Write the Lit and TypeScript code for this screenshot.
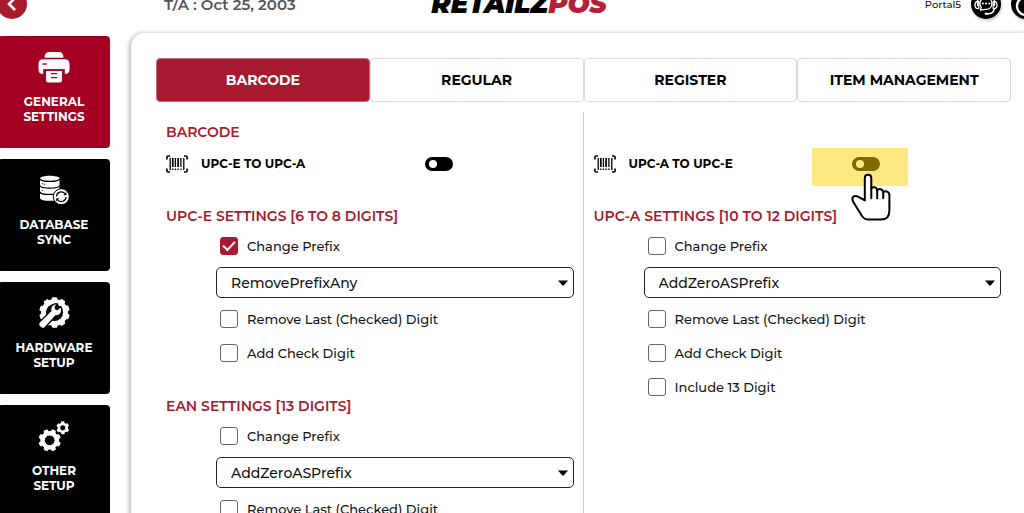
import { LitElement, html, css, nothing, type TemplateResult } from "lit";
import { customElement, property, state } from "lit/decorators.js";
import { classMap } from "lit/directives/class-map.js";

// Outline of a toothed wheel centred on (cx, cy).
function gearPath(cx: number, cy: number, outer: number, inner: number, teeth: number, turn = 0): string {
  const step = (Math.PI * 2) / teeth;
  const points: string[] = [];
  for (let i = 0; i < teeth; i++) {
    const a = i * step + turn;
    const corners: [number, number][] = [
      [a - step * 0.3, inner],
      [a - step * 0.2, outer],
      [a + step * 0.2, outer],
      [a + step * 0.3, inner],
    ];
    for (const [t, r] of corners) {
      points.push(`${(cx + r * Math.cos(t)).toFixed(2)} ${(cy + r * Math.sin(t)).toFixed(2)}`);
    }
  }
  return `M${points.join("L")}Z`;
}

const icons: Record<string, TemplateResult> = {
  printer: html`<svg viewBox="0 0 32 32" aria-hidden="true">
    <path fill="#fff" d="M6.5 6.8 Q6.5 1 11.5 1 H20.5 Q25.5 1 25.5 6.8 Z"/>
    <path fill="#fff" d="M5 8.3 H27 Q31.5 8.3 31.5 13 V18.5 Q31.5 23 26.8 23 V18.6 H5.2 V23 Q.5 23 .5 18.5 V13 Q.5 8.3 5 8.3Z"/>
    <path stroke="#a30024" stroke-width="1.4" stroke-linecap="round" d="M5 13H8.2M6 18.9H26"/>
    <path fill="#fff" d="M8 20H24V29.5Q24 31.5 22 31.5H10Q8 31.5 8 29.5Z"/>
    <path stroke="#a30024" stroke-width="1.3" stroke-linecap="round" d="M13.5 22.7H18.8M13.5 26.6H18.8"/>
  </svg>`,
  database: html`<svg viewBox="0 0 32 32" aria-hidden="true">
    <path fill="#fff" d="M2 4.5C2 .8 21.5 .8 21.5 4.5V24C21.5 27.8 2 27.8 2 24Z"/>
    <path fill="none" stroke="#000" stroke-width="1.3" d="M2 4.8C2.5 8.2 21 8.2 21.5 4.8M2 11.5C2.5 15 21 15 21.5 11.5M2 17.8C2.5 21.3 21 21.3 21.5 17.8"/>
    <path stroke="#000" stroke-width="1" stroke-linecap="round" d="M4.2 9.7H4.4M6.2 10.2H6.6M4.2 16.3H4.4"/>
    <circle cx="23.3" cy="22.7" r="8" fill="#fff" stroke="#000" stroke-width="1"/>
    <path fill="none" stroke="#000" stroke-width="1.2" d="M18.5 22.5A4.8 4.8 0 0 1 27 19.6M28.1 22.9A4.8 4.8 0 0 1 19.6 25.8"/>
    <path d="M28.4 18V21.2H25.2ZM18.2 27.4V24.2H21.4Z"/>
  </svg>`,
  hardware: html`<svg viewBox="0 0 32 32" aria-hidden="true">
    <path fill="#fff" stroke="#fff" stroke-width="1.4" stroke-linejoin="round" d="${gearPath(16.5, 15.5, 14.6, 12.8, 10, 0.31)}"/>
    <circle cx="16.5" cy="15.5" r="8.6"/>
    <path fill="#fff" stroke="#000" stroke-width="1.3" stroke-linejoin="round" d="M22.8 9.6 19.5 12.6 17.6 11.8 17.2 9.8 19.8 7C15.6 5.8 11.8 9.2 12.9 13.8L1 25.6C-.6 28.6 3.4 32.6 6.6 31L17.9 18.7C22.6 19.6 25.3 13.8 22.8 9.6Z"/>
  </svg>`,
  gears: html`<svg viewBox="0 0 32 32" aria-hidden="true">
    <path fill="#fff" fill-rule="evenodd" stroke="#fff" stroke-width="1" stroke-linejoin="round" d="${gearPath(11.7, 20.3, 10.8, 8.9, 8, 0.39)}M17 20.3A5.3 5.3 0 1 0 6.4 20.3A5.3 5.3 0 1 0 17 20.3Z"/>
    <path fill="#fff" fill-rule="evenodd" stroke="#fff" stroke-width=".8" stroke-linejoin="round" d="${gearPath(24.8, 7.8, 6.2, 4.8, 6, 0.5)}M27.8 7.8A3 3 0 1 0 21.8 7.8A3 3 0 1 0 27.8 7.8Z"/>
  </svg>`,
};

const barcodeIcon = html`<svg class="barcode" viewBox="0 0 22 18" aria-hidden="true">
  <path fill="none" stroke="#000" stroke-width="1.6" d="M4 1H2.2Q.9 1 .9 2.3V4.5M18 1H19.8Q21.1 1 21.1 2.3V4.5M4 17H2.2Q.9 17 .9 15.7V13.5M18 17H19.8Q21.1 17 21.1 15.7V13.5"/>
  <path stroke="#000" stroke-width="1.3" d="M4.2 3V15M17.8 3V15M9.4 3V12M14.9 3V12"/>
  <path stroke="#000" stroke-width="1.7" d="M6.8 3V12M12.1 3V12"/>
  <path stroke="#000" stroke-width="1.3" d="M6.8 13.6V15M9.4 13.6V15M12.1 13.6V15M14.9 13.6V15"/>
</svg>`;

interface Option { label: string; checked?: boolean }
interface Group { title: string; prefix: string; changePrefix: boolean; options: Option[] }

const upcE: Group = {
  title: "UPC-E SETTINGS [6 TO 8 DIGITS]",
  prefix: "RemovePrefixAny",
  changePrefix: true,
  options: [{ label: "Remove Last (Checked) Digit" }, { label: "Add Check Digit" }],
};
const ean: Group = {
  title: "EAN SETTINGS [13 DIGITS]",
  prefix: "AddZeroASPrefix",
  changePrefix: false,
  options: [{ label: "Remove Last (Checked) Digit" }],
};
const upcA: Group = {
  title: "UPC-A SETTINGS [10 TO 12 DIGITS]",
  prefix: "AddZeroASPrefix",
  changePrefix: false,
  options: [{ label: "Remove Last (Checked) Digit" }, { label: "Add Check Digit" }, { label: "Include 13 Digit" }],
};

const prefixes = ["RemovePrefixAny", "AddZeroASPrefix"];

@customElement("settings-group")
export class SettingsGroup extends LitElement {
  @property({ attribute: false }) group!: Group;

  static styles = css`
    :host { display: block; margin-top: 26px; }
    .title { margin: 0 0 3px; font-size: 14px; line-height: 20px; font-weight: 600; color: #a81a30; white-space: nowrap; }
    .body { padding-left: 50px; }
    .check { display: flex; align-items: center; gap: 9px; height: 34px; padding-left: 4px; font-size: 13px; font-weight: 500; color: #161616; white-space: nowrap; }
    .box { appearance: none; box-sizing: border-box; flex: none; display: grid; place-items: center; width: 18px; height: 18px; margin: 0; border: 1px solid #666; border-radius: 3px; background: #fff; }
    .box:checked { background: #a81a30; border-color: #a81a30; }
    .box:checked::before { content: ""; width: 10px; height: 5px; border: solid #fff; border-width: 0 0 2px 2px; transform: translateY(-2px) rotate(-47deg); }
    .picker { display: grid; align-items: center; margin: 4px 0; }
    .picker > * { grid-area: 1 / 1; }
    .select { appearance: none; box-sizing: border-box; width: 100%; height: 31px; padding: 0 14px; border: 1px solid #222; border-radius: 5px; background: #fff; color: #111; font: inherit; font-size: 14px; font-weight: 500; }
    .arrow { justify-self: end; width: 10px; height: 6px; margin-right: 6px; pointer-events: none; }
  `;

  render() {
    const g = this.group;
    return html`
      <h2 class="title">${g.title}</h2>
      <div class="body">
        <label class="check"><input class="box" type="checkbox" .checked=${g.changePrefix}>Change Prefix</label>
        <div class="picker">
          <select class="select" aria-label="Prefix">
            ${prefixes.map((p) => html`<option ?selected=${p === g.prefix}>${p}</option>`)}
          </select>
          <svg class="arrow" viewBox="0 0 10 6" aria-hidden="true"><path d="M0 .4H10L5.6 5.6H4.4Z"/></svg>
        </div>
        ${g.options.map((o) => html`<label class="check"><input class="box" type="checkbox" .checked=${!!o.checked}>${o.label}</label>`)}
      </div>`;
  }
}

@customElement("app-root")
export class AppRoot extends LitElement {
  @state() private tab = "BARCODE";

  static styles = css`
    :host { display: block; height: 100vh; overflow: hidden; background: #fff; color: #000; font-family: Montserrat, Inter, "Liberation Sans", sans-serif; }
    button { font: inherit; border: 0; cursor: pointer; }
    .header { display: grid; grid-template-columns: 1fr auto 1fr; align-items: center; height: 48px; margin: -20px -17px 0 -3px; }
    .start { display: flex; align-items: center; gap: 137px; }
    .end { display: flex; align-items: center; justify-content: flex-end; gap: 10px; }
    .back { display: grid; place-items: center; width: 30px; height: 30px; padding: 0; border-radius: 50%; background: #a81a30; }
    .back svg { width: 16px; height: 16px; }
    .date { font-size: 15px; font-weight: 600; color: #555; white-space: nowrap; }
    .logo { font-size: 26px; line-height: 30px; font-weight: 900; font-style: italic; }
    .logo .pos { color: #b51f38; }
    .portal { font-size: 10px; font-weight: 500; color: #111; }
    .round { display: grid; place-items: center; width: 30px; height: 30px; padding: 0; border-radius: 50%; background: #000; box-shadow: 1px 2px 3px #0003; }
    .round svg { width: 30px; height: 30px; }
    .main { display: grid; grid-template-columns: 112px 1fr; gap: 21px; margin: 0 -12px 0 -2px; }
    .nav { display: flex; flex-direction: column; gap: 11px; padding-top: 8px; }
    .tile { display: flex; flex-direction: column; align-items: center; gap: 11px; height: 112px; padding: 15px 0 0; border-radius: 4px; background: #000; color: #fff; font-size: 12px; line-height: 15px; font-weight: 700; }
    .tile.active { background: #a30024; }
    .tile svg { width: 32px; height: 32px; }
    .tile span { width: min-content; }
    .panel { margin-top: 5px; min-height: 100vh; padding: 25px; box-sizing: border-box; border-radius: 14px; background: #fff; box-shadow: -2px 0 4px #0004; }
    .tabs { display: grid; grid-template-columns: repeat(4, 1fr); }
    .tab { box-sizing: border-box; height: 44px; padding: 0; border: 1px solid #d9d9d9; border-radius: 4px; background: #fff; color: #000; font-size: 14px; font-weight: 700; }
    .tab.active { background: #a81a30; border-color: #c76b7a; color: #fff; }
    .columns { display: grid; grid-template-columns: 1fr 1fr; margin-top: 10px; min-height: 100vh; }
    .column { padding: 10px 10px 0; }
    .column + .column { box-shadow: -1px 0 #d2d2d2; }
    .heading { height: 25px; margin: 0; font-size: 14px; line-height: 20px; font-weight: 600; color: #a81a30; }
    .row { display: grid; grid-template-columns: 22px 1fr auto; align-items: center; column-gap: 13px; height: 33px; padding-right: 121px; font-size: 12px; font-weight: 700; white-space: nowrap; }
    .barcode { width: 22px; height: 18px; }
    .toggle { position: relative; display: flex; }
    .switch { appearance: none; display: flex; align-items: center; box-sizing: border-box; width: 28px; height: 14px; margin: 0; padding: 0 4px; border-radius: 7px; background: #000; }
    .switch::before { content: ""; width: 8px; height: 8px; border-radius: 50%; background: #fff; }
    .switch:checked { justify-content: flex-end; }
    .spot { position: absolute; left: -40px; top: -9px; width: 96px; height: 38px; background: rgba(255, 210, 0, 0.5); pointer-events: none; }
    .hand { position: absolute; left: -2px; top: 15px; width: 42px; height: 50px; pointer-events: none; }
  `;

  private row(label: string, guided = false) {
    return html`<label class="row">
      ${barcodeIcon}<span>${label}</span>
      <span class="toggle">
        <input class="switch" type="checkbox" role="switch">
        ${guided
          ? html`<span class="spot"></span>
              <svg class="hand" viewBox="0 0 42 50" aria-hidden="true">
                <path fill="#fff" stroke="#000" stroke-width="2" stroke-linejoin="round" stroke-linecap="round" d="M14.8 28.4V6.2C14.8 1.6 21.3 1.6 21.3 6.2V16.5C22.5 14.4 26.8 14.8 27.2 18.3C29 16.1 32.9 17 33.2 20C35.5 18.4 39.4 19.6 39.4 23V38.5C39.4 44.5 36.5 47.6 31 47.6H18.5C15.5 47.6 13.7 46.4 12 44L3 29.4C1 25.4 4.2 22.7 8 24.6Z"/>
                <path fill="none" stroke="#000" stroke-width="2" stroke-linecap="round" d="M21.3 16.5V26.2M27.2 18.3V26.2M33.2 20V26.2"/>
              </svg>`
          : nothing}
      </span>
    </label>`;
  }

  render() {
    const tiles = [
      ["printer", "GENERAL SETTINGS"],
      ["database", "DATABASE SYNC"],
      ["hardware", "HARDWARE SETUP"],
      ["gears", "OTHER SETUP"],
    ];
    return html`
      <header class="header">
        <div class="start">
          <button class="back" aria-label="Back"><svg viewBox="0 0 16 16"><path fill="none" stroke="#fff" stroke-width="2.6" d="M11 2 5 8l6 6"/></svg></button>
          <span class="date">T/A : Oct 25, 2003</span>
        </div>
        <div class="logo">RETAILZ<span class="pos">POS</span></div>
        <div class="end">
          <span class="portal">Portal5</span>
          <button class="round" aria-label="Support"><svg viewBox="0 0 30 30">
            <g fill="none" stroke="#fff" stroke-width="1.3" stroke-linecap="round">
              <path d="M6.5 16.5V12C7 2.5 23 2.5 23.5 12V16.5M23.3 20C22.6 23.4 20 24.8 17 24.8"/>
              <path d="M7 12.3C3 12.3 3 19.7 7 19.7H7.8V12.3ZM23 12.3C27 12.3 27 19.7 23 19.7H22.2V12.3Z"/>
              <path d="M9.6 21 10.2 18.4C7.2 13.4 10.4 8.6 15 8.6C22.8 8.6 22.8 20.4 15 20.4C13.4 20.4 12.4 20.8 9.6 21Z"/>
            </g>
            <path stroke="#fff" stroke-width="2" stroke-linecap="round" d="M11.8 14.5h.1M15 14.5h.1M18.2 14.5h.1M14.6 24.8h2"/>
          </svg></button>
          <button class="round" aria-label="Power"><svg viewBox="0 0 30 30"><path fill="none" stroke="#fff" stroke-width="2.4" stroke-linecap="round" d="M11 9A9 9 0 1 0 19 9M15 6V14"/></svg></button>
        </div>
      </header>
      <div class="main">
        <nav class="nav">
          ${tiles.map(([icon, label], i) => html`<button class=${classMap({ tile: true, active: i === 0 })}>${icons[icon]}<span>${label}</span></button>`)}
        </nav>
        <main class="panel">
          <div class="tabs" role="tablist">
            ${["BARCODE", "REGULAR", "REGISTER", "ITEM MANAGEMENT"].map((t) => html`<button role="tab" aria-selected=${t === this.tab} class=${classMap({ tab: true, active: t === this.tab })} @click=${() => (this.tab = t)}>${t}</button>`)}
          </div>
          <div class="columns">
            <section class="column">
              <h2 class="heading">BARCODE</h2>
              ${this.row("UPC-E TO UPC-A")}
              <settings-group .group=${upcE}></settings-group>
              <settings-group .group=${ean}></settings-group>
            </section>
            <section class="column">
              <div class="heading"></div>
              ${this.row("UPC-A TO UPC-E", true)}
              <settings-group .group=${upcA}></settings-group>
            </section>
          </div>
        </main>
      </div>`;
  }
}
